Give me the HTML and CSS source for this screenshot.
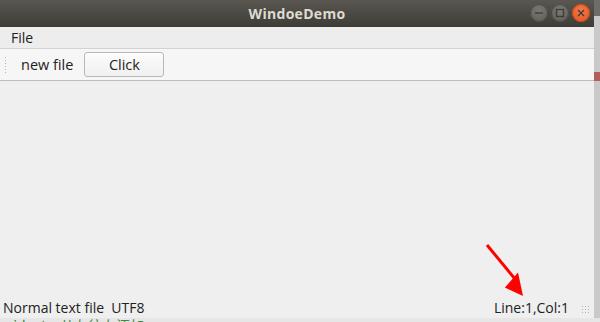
FILE: index.html
```html
<!DOCTYPE html>
<html lang="en">
<head>
    <meta charset="UTF-8">
    <meta name="viewport" content="width=device-width, initial-scale=1.0">
    <title>WindoeDemo</title>
    <link rel="stylesheet" href="styles.css">
</head>
<body>
    <div class="desktop">
        <div class="window">
            <div class="titlebar">
                <span class="title">WindoeDemo</span>
                <div class="controls">
                    <span class="ctl ctl-min"><svg width="16" height="16" viewBox="0 0 16 16"><line x1="4" y1="8" x2="12" y2="8" stroke="#3c3b37" stroke-width="1.3"/></svg></span>
                    <span class="ctl ctl-max"><svg width="16" height="16" viewBox="0 0 16 16"><rect x="4.5" y="4.5" width="7" height="7" fill="none" stroke="#3c3b37" stroke-width="1.3"/></svg></span>
                    <span class="ctl ctl-close"><svg width="16" height="16" viewBox="0 0 16 16"><path d="M5 5 L11 11 M11 5 L5 11" stroke="#3c3b37" stroke-width="1.3"/></svg></span>
                </div>
            </div>
            <div class="menubar">
                <span class="menu-item">File</span>
            </div>
            <div class="toolbar">
                <span class="handle"></span>
                <span class="tool-text">new file</span>
                <button class="btn">Click</button>
            </div>
            <div class="central">
                <svg class="arrow" width="60" height="60" viewBox="0 0 60 60">
                    <line x1="2" y1="2" x2="30" y2="36" stroke="#ff0000" stroke-width="3"/>
                    <polygon points="22,41 38,29 38,53" fill="#ff0000" transform="rotate(-12 38 53)"/>
                </svg>
            </div>
            <div class="statusbar">
                <span class="status-left">Normal text file&nbsp; UTF8</span>
                <span class="status-right">Line:1,Col:1</span>
                <span class="grip"></span>
            </div>
        </div>
        <div class="side-strip">
            <span class="strip-top"></span>
            <span class="strip-red"></span>
        </div>
    </div>
    <div class="bottom-strip">widget，从左往右添加</div>
</body>
</html>
```

FILE: styles.css
```css
* {
    margin: 0;
    padding: 0;
    box-sizing: border-box;
}
body {
    width: 600px;
    height: 322px;
    overflow: hidden;
    font-family: "Open Sans", "Noto Sans", sans-serif;
    font-size: 14px;
    color: #222;
    background: #d8d8d8;
}
.desktop {
    display: flex;
    height: 318px;
}
.window {
    width: 594px;
    display: flex;
    flex-direction: column;
    background: #efefef;
}

/* barra de titulo */
.titlebar {
    height: 27px;
    background: linear-gradient(#5a5750, #3d3c37);
    display: flex;
    align-items: center;
    justify-content: center;
    position: relative;
}
.title {
    color: #dfdbd2;
    font-weight: bold;
    font-size: 14px;
    letter-spacing: 0.3px;
}
.controls {
    position: absolute;
    right: 4px;
    top: 4px;
    display: flex;
    gap: 3px;
}
.ctl {
    width: 18px;
    height: 18px;
    border-radius: 50%;
    display: flex;
    align-items: center;
    justify-content: center;
    background: radial-gradient(circle at 50% 35%, #7a7872, #5d5b56);
    box-shadow: inset 0 0 0 1px #4a4944;
}
.ctl-close {
    background: radial-gradient(circle at 50% 35%, #f4784a, #e0531f);
    box-shadow: inset 0 0 0 1px #c8461a;
}

.menubar {
    height: 22px;
    background: #ededed;
    border-bottom: 1px solid #d2d2d2;
    display: flex;
    align-items: center;
    padding-left: 11px;
}
.menu-item {
    font-size: 14px;
}

.toolbar {
    height: 32px;
    background: #f6f6f6;
    border-bottom: 1px solid #bdbdbd;
    display: flex;
    align-items: center;
}
.handle {
    width: 4px;
    height: 18px;
    margin-left: 4px;
    background-image: radial-gradient(circle, #b4b4b4 0.8px, transparent 1px);
    background-size: 3px 3px;
}
.tool-text {
    margin-left: 13px;
    margin-right: 11px;
    font-size: 14.5px;
}
.btn {
    width: 80px;
    height: 25px;
    font-family: inherit;
    font-size: 14.5px;
    color: #222;
    border: 1px solid #b8b8b8;
    border-radius: 3px;
    background: linear-gradient(#fcfcfc, #f0f0f0);
}

.central {
    flex: 1;
    position: relative;
}
.arrow {
    position: absolute;
    left: 485px;
    top: 162px;
}

.statusbar {
    height: 22px;
    display: flex;
    align-items: center;
    padding-left: 3px;
    position: relative;
}
.status-left {
    flex: 1;
}
.status-right {
    margin-right: 25px;
}
.grip {
    position: absolute;
    right: 3px;
    bottom: 3px;
    width: 10px;
    height: 10px;
    background-image: radial-gradient(circle, #b4b4b4 0.8px, transparent 1px);
    background-size: 3px 3px;
}

.side-strip {
    flex: 1;
    display: flex;
    flex-direction: column;
    background: #c9c9c9;
}
.strip-top {
    height: 16px;
    background: #6e6d69;
}
.strip-red {
    height: 9px;
    margin-top: 56px;
    background: #b0605a;
}

.bottom-strip {
    height: 4px;
    overflow: hidden;
    background: #e6e6e6;
    color: #3c8a3c;
    font-size: 14px;
    line-height: 14px;
    padding-left: 2px;
    font-family: "Noto Sans CJK SC", sans-serif;
}
```
